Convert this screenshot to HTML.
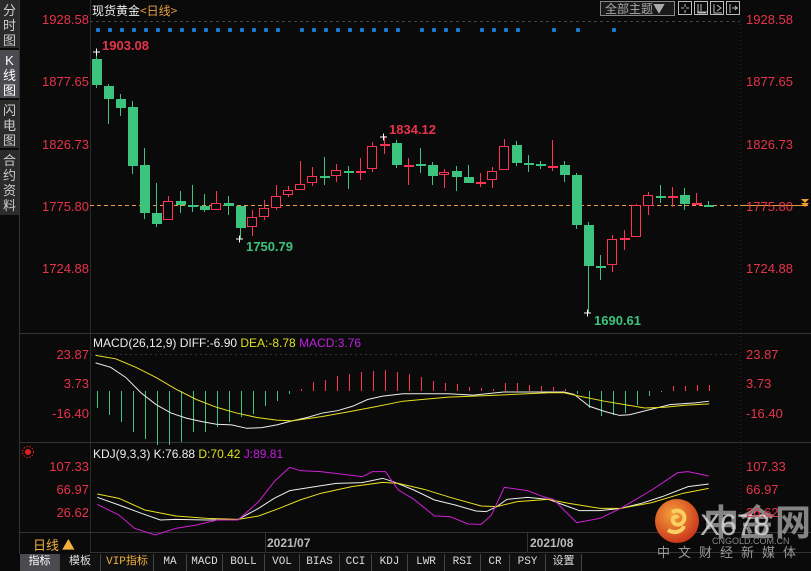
<!DOCTYPE html>
<html><head><meta charset="utf-8"><style>
*{margin:0;padding:0;box-sizing:border-box}
body{width:811px;height:571px;background:#0a0a0a;overflow:hidden;position:relative;font-family:"Liberation Sans","Noto Sans CJK SC",sans-serif}
.side{position:absolute;left:0;top:0;width:19px;height:215px;background:#2b2b2b;color:#ccc;font-size:13px;line-height:15px;text-align:center}
.side div{border-bottom:2px solid #0a0a0a;padding:3px 0}
.side .sel{background:#4a4a50;color:#fff}
.ax{position:absolute;color:#e8334a;font-size:13px}
.l{right:722px;text-align:right}
.r{left:746px}
.tb{position:absolute;top:554px;left:20px;height:17px;display:flex;font-family:"Liberation Mono","Noto Sans CJK SC",monospace;font-size:11px;color:#ddd;white-space:nowrap}
.tb div{border-right:1px solid #444;line-height:17px;background:#111;text-align:center;overflow:hidden}
</style></head><body>
<div class="side">
<div style="height:50px">分<br>时<br>图</div>
<div class="sel" style="height:50px">K<br>线<br>图</div>
<div style="height:50px">闪<br>电<br>图</div>
<div style="height:65px;border:none">合<br>约<br>资<br>料</div>
</div>
<svg width="811" height="571" style="position:absolute;left:0;top:0">
<line x1="19.5" y1="0" x2="19.5" y2="554" stroke="#333"/>
<line x1="90.5" y1="0" x2="90.5" y2="552" stroke="#2a2a2a"/>
<line x1="740.5" y1="20" x2="740.5" y2="532" stroke="#2a2a2a" stroke-dasharray="1,3"/>
<line x1="20" y1="333.5" x2="811" y2="333.5" stroke="#333"/>
<line x1="20" y1="442.5" x2="811" y2="442.5" stroke="#333"/>
<line x1="20" y1="532.5" x2="811" y2="532.5" stroke="#333"/>
<line x1="90" y1="552.5" x2="811" y2="552.5" stroke="#333"/>
<line x1="90" y1="21.5" x2="740" y2="21.5" stroke="#444" stroke-dasharray="3,3"/>
<line x1="90" y1="354.5" x2="740" y2="354.5" stroke="#333" stroke-dasharray="2,3"/>
<line x1="90" y1="205.5" x2="740" y2="205.5" stroke="#e89a40" stroke-dasharray="4,3"/>
<line x1="740" y1="205.5" x2="808" y2="205.5" stroke="#e89a40"/>
<path d="M801 199h8l-4 4zM801 203h8l-4 4z" fill="#f0a030"/>
<line x1="265.5" y1="533" x2="265.5" y2="552" stroke="#333"/>
<line x1="527.5" y1="533" x2="527.5" y2="552" stroke="#333"/>
<g fill="#1a7ad0" id="dots"></g>
<g id="candles"></g>
<g id="hist" shape-rendering="crispEdges"></g>
<g transform="translate(20,330) scale(0.5038,0.339)" fill="none">
<polyline vector-effect="non-scaling-stroke" stroke="#eee" stroke-width="1" points="150,97 180,110 210,140 240,185 270,220 300,245 330,260 360,270 390,278 420,280 450,290 480,288 510,280 540,268 570,258 600,245 630,238 660,225 690,205 720,195 760,188 850,188 900,192 960,183 1000,183 1080,183 1100,190 1130,225 1160,240 1190,252 1210,250 1250,235 1290,220 1340,215 1368,210"/>
<polyline vector-effect="non-scaling-stroke" stroke="#e8e020" stroke-width="1" points="150,75 190,85 230,110 270,140 310,175 350,205 390,228 430,245 470,258 510,266 540,268 600,255 650,242 700,228 760,210 850,198 950,192 1050,185 1080,185 1110,195 1160,210 1200,220 1240,230 1280,228 1320,222 1368,218"/>
</g>
<g transform="translate(0,440) scale(0.5173,0.3333)" fill="none">
<polyline vector-effect="non-scaling-stroke" stroke="#eee" points="188,172 230,195 270,218 310,240 340,238 400,240 460,238 500,205 530,175 560,152 600,142 650,130 700,128 740,115 760,125 800,150 840,180 880,195 920,213 940,215 960,200 980,178 1020,172 1060,178 1090,195 1120,212 1160,212 1200,205 1240,190 1280,170 1330,140 1370,132"/>
<polyline vector-effect="non-scaling-stroke" stroke="#e8e020" points="188,162 230,175 280,210 340,228 400,235 460,238 500,228 540,205 580,180 620,160 680,140 740,127 770,130 820,148 870,172 930,198 960,200 1000,185 1060,178 1100,190 1160,205 1200,205 1260,188 1320,160 1370,145"/>
<polyline vector-effect="non-scaling-stroke" stroke="#d020d8" points="188,193 230,225 260,265 300,285 340,265 380,255 420,240 460,240 500,185 530,125 560,82 580,92 620,95 700,110 720,95 745,95 770,150 800,178 840,228 870,230 905,252 930,253 950,225 975,142 1020,152 1050,170 1070,178 1090,210 1115,248 1160,235 1200,205 1260,150 1310,98 1330,95 1370,108"/>
</g>
<circle cx="28" cy="452" r="3" fill="#e02020"/><circle cx="28" cy="452" r="5.5" fill="none" stroke="#e02020" stroke-dasharray="1.5,1.5"/>
<rect x="600.5" y="1.5" width="74" height="14" fill="#1a1a1a" stroke="#888"/>
<text x="605" y="13" fill="#aaa" font-size="12" font-family="Noto Sans CJK SC,sans-serif">全部主题▼</text>
<g fill="none" stroke="#bbb"><rect x="678.5" y="1.5" width="13" height="13"/><rect x="694.5" y="1.5" width="13" height="13"/><rect x="710.5" y="1.5" width="13" height="13"/><rect x="726.5" y="1.5" width="13" height="13"/>
<path d="M685 4v3M685 10v3M681 8h3M686 8h3M698 4v9h8M701 4v7M697 12h10M714 4v9h8M717 5l4 3-4 3M730 4v9M732 8h6M735 6l2 2-2 2"/></g>
<defs><radialGradient id="g" cx="0.4" cy="0.35" r="0.7"><stop offset="0" stop-color="#f6a23a"/><stop offset="1" stop-color="#c8301a"/></radialGradient></defs>
<circle cx="677" cy="521" r="22" fill="url(#g)"/>
<path d="M672 512c8-4 14 2 12 8s-10 6-11 1 4-5 5-3M668 530c6 4 14 2 16-4" stroke="#f8d060" stroke-width="4" fill="none"/>
<text x="703" y="535" fill="#9a9a9a" font-size="36" font-weight="bold" font-family="Noto Sans CJK SC,sans-serif" opacity="0.85">中金网</text>
<text x="700" y="535" fill="#ddd" font-size="30" font-family="Liberation Sans" opacity="0.8">X678</text>
<text x="712" y="544" fill="#888" font-size="9" font-family="Liberation Sans">CNGOLD.COM.CN</text>
<text x="657" y="557" fill="#999" font-size="13" letter-spacing="8" font-family="Noto Sans CJK SC,sans-serif">中文财经新媒体</text>
</svg>
<div style="position:absolute;left:92px;top:2px;font-size:12px;font-family:'Noto Sans CJK SC',sans-serif;color:#eee">现货黄金<span style="color:#e8a040">&lt;日线&gt;</span></div>
<div class="ax l" style="top:12px">1928.58</div>
<div class="ax l" style="top:74px">1877.65</div>
<div class="ax l" style="top:137px">1826.73</div>
<div class="ax l" style="top:199px">1775.80</div>
<div class="ax l" style="top:261px">1724.88</div>
<div class="ax r" style="top:12px">1928.58</div>
<div class="ax r" style="top:74px">1877.65</div>
<div class="ax r" style="top:137px">1826.73</div>
<div class="ax r" style="top:199px">1775.80</div>
<div class="ax r" style="top:261px">1724.88</div>
<div class="ax" style="left:102px;top:38px;font-weight:bold">1903.08</div>
<div class="ax" style="left:389px;top:122px;font-weight:bold">1834.12</div>
<div class="ax" style="left:246px;top:239px;font-weight:bold;color:#3cc47e">1750.79</div>
<div class="ax" style="left:594px;top:313px;font-weight:bold;color:#3cc47e">1690.61</div>
<div style="position:absolute;left:93px;top:336px;font-size:12px;color:#eee">MACD(26,12,9) DIFF:-6.90 <span style="color:#e0e020">DEA:-8.78</span> <span style="color:#c020e0">MACD:3.76</span></div>
<div class="ax l" style="top:347px">23.87</div><div class="ax l" style="top:376px">3.73</div><div class="ax l" style="top:406px">-16.40</div>
<div class="ax r" style="top:347px">23.87</div><div class="ax r" style="top:376px">3.73</div><div class="ax r" style="top:406px">-16.40</div>
<div style="position:absolute;left:93px;top:447px;font-size:12px;color:#eee">KDJ(9,3,3) K:76.88 <span style="color:#e0e020">D:70.42</span> <span style="color:#c020e0">J:89.81</span></div>
<div class="ax l" style="top:459px">107.33</div><div class="ax l" style="top:482px">66.97</div><div class="ax l" style="top:505px">26.62</div>
<div class="ax r" style="top:459px">107.33</div><div class="ax r" style="top:482px">66.97</div><div class="ax r" style="top:505px">26.62</div>
<div style="position:absolute;left:267px;top:536px;font-size:12px;color:#bbb;font-weight:bold">2021/07</div>
<div style="position:absolute;left:530px;top:536px;font-size:12px;color:#bbb;font-weight:bold">2021/08</div>
<div style="position:absolute;left:33px;top:537px;font-size:13px;color:#f0b040;font-family:'Noto Sans CJK SC',sans-serif;line-height:16px">日线 ▲</div>
<div class="tb"><div style="background:#4a4a50;color:#fff;width:40px">指标</div><div style="width:41px">模板</div><div style="color:#f0b040;width:53px">VIP指标</div><div style="width:33px">MA</div><div style="width:36px">MACD</div><div style="width:42px">BOLL</div><div style="width:35px">VOL</div><div style="width:40px">BIAS</div><div style="width:32px">CCI</div><div style="width:36px">KDJ</div><div style="width:37px">LWR</div><div style="width:36px">RSI</div><div style="width:29px">CR</div><div style="width:36px">PSY</div><div style="width:36px">设置</div></div>
<script>
var C=[[0,59,85,52,88],[0,86,99,84,124],[0,99,108,94,116],[0,107,166,101,174],[0,165,213,148,219],[0,213,224,183,227],[1,201,220,196,220],[0,201,205,191,213],[0,205,206,185,212],[0,206,210,194,212],[1,203,210,191,210],[0,203,206,196,215],[0,206,228,206,239],[1,217,227,210,236],[1,208,217,200,220],[1,196,208,185,210],[1,190,195,186,197],[1,184,190,161,190],[1,176,183,167,186],[0,176,177,157,185],[1,170,176,164,182],[0,171,172,166,189],[1,171,172,158,180],[1,146,169,142,172],[1,144,146,136,154],[0,143,165,140,168],[1,165,166,158,185],[0,164,166,148,173],[0,165,176,162,185],[1,172,175,169,188],[0,171,177,166,191],[0,177,183,165,183],[1,182,183,173,187],[1,171,180,167,188],[1,146,170,139,170],[0,145,163,141,166],[0,163,164,155,172],[0,164,166,161,169],[1,166,167,140,171],[0,165,175,161,182],[0,175,225,173,229],[0,225,266,222,313],[0,266,267,255,280],[1,239,265,235,272],[1,238,239,230,250],[1,205,237,204,237],[1,195,206,192,215],[0,196,197,185,203],[1,196,197,187,207],[0,195,204,188,210],[1,203,204,193,205],[0,205,206,201,207]];
var s='';C.forEach(function(c,i){var x=96+12*i,col=c[0]?'#ff3355':'#3cc47e';var h=Math.max(c[2]-c[1],1);
s+='<line x1="'+(x+.5)+'" y1="'+c[3]+'" x2="'+(x+.5)+'" y2="'+c[4]+'" stroke="'+col+'"/>';
if(c[0]&&h>2)s+='<rect x="'+(x-4.5)+'" y="'+(c[1]+.5)+'" width="9" height="'+(h-1)+'" fill="#0a0a0a" stroke="'+col+'"/>';
else s+='<rect x="'+(x-4)+'" y="'+c[1]+'" width="10" height="'+(h<2?2:h)+'" fill="'+col+'"/>';});
s+='<path d="M93 52h7M96.5 48.5v7M380 137h7M383.5 133.5v7M236 239h7M239.5 235.5v7M584 313h7M587.5 309.5v7" stroke="#fff"/>';
document.getElementById('candles').innerHTML=s;
var H=[408,415,422,432,439,445,445,442,432,432,427,422,417,414,406,401,394,389,382,380,376,374,372,371,370,372,374,377,381,383,384,387,388,389,383,383,385,386,387,389,394,408,416,415,413,405,396,392,386,386,385,385];
var h='';H.forEach(function(y,i){var x=97+12*i;var t=Math.min(y,391),hh=Math.abs(y-391)||1;h+='<rect x="'+x+'" y="'+t+'" width="1" height="'+hh+'" fill="'+(y>391?'#3cc47e':'#ff3355')+'"/>';});
document.getElementById('hist').innerHTML=h;
var D=[98,110,122,134,146,158,170,182,194,206,218,230,242,254,266,278,302,314,326,338,350,362,374,386,398,422,434,446,458,482,494,506,518,554,578,614];
var d='';D.forEach(function(x){d+='<rect x="'+(x-2)+'" y="28" width="4" height="4" rx="1"/>';});
document.getElementById('dots').innerHTML=d;
</script>
</body></html>
